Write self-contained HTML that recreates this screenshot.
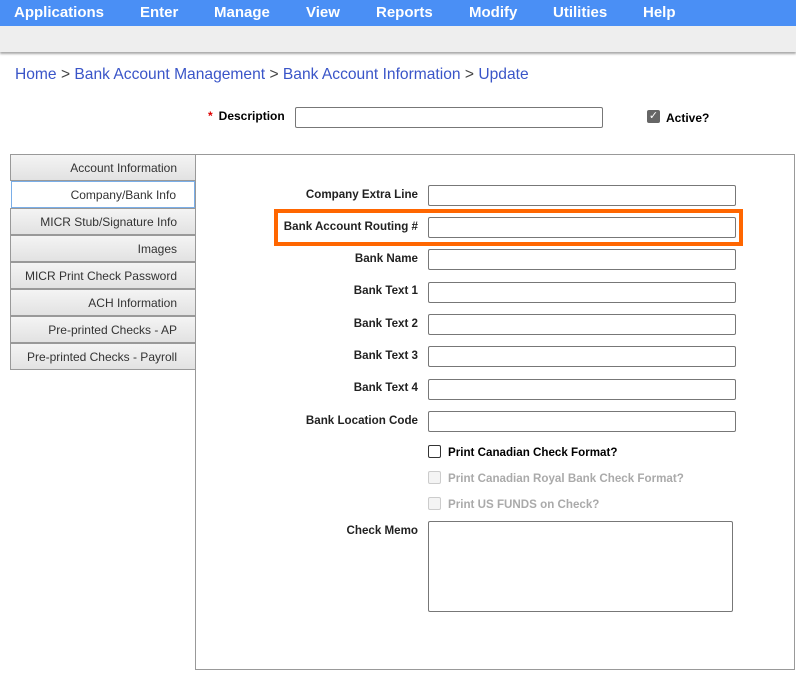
<!DOCTYPE html>
<html><head><style>
*{box-sizing:border-box}
body{margin:0;width:796px;height:673px;background:#fff;font-family:"Liberation Sans",sans-serif;position:relative;overflow:hidden}
.nav{position:absolute;left:0;top:0;width:796px;height:26px;background:#4a8ff5}
.nav span{position:absolute;top:4px;color:#fff;font-weight:bold;font-size:15px}
.bar{position:absolute;left:0;top:26px;width:796px;height:26px;background:#eee;box-shadow:0 2px 2px #aaa}
.crumb{position:absolute;left:15px;top:66px;font-size:15.6px;color:#3a55c8}
.crumb b{font-weight:normal;color:#444}
.lbl{position:absolute;font-size:11.6px;font-weight:bold;color:#222;text-align:right;width:200px}
.inp{position:absolute;left:428px;width:308px;height:21px;border:1px solid #777;border-radius:2px;background:#fff}
.tab{position:absolute;left:10px;width:186px;height:27px;background:linear-gradient(#f4f4f4,#e2e2e2);border:1px solid #999;font-size:12px;color:#333;text-align:right;padding:6px 18px 0 0}
.cb{position:absolute;left:428px;width:13px;height:13px;border:1px solid #333;border-radius:2px;background:#fff}
.ck{position:absolute;left:448px;font-size:11.6px;font-weight:bold}
</style></head><body>
<div class="nav"><span style="left:14px">Applications</span><span style="left:140px">Enter</span><span style="left:214px">Manage</span><span style="left:306px">View</span><span style="left:376px">Reports</span><span style="left:469px">Modify</span><span style="left:553px">Utilities</span><span style="left:643px">Help</span></div>
<div class="bar"></div>
<div class="crumb">Home <b>&gt;</b> Bank Account Management <b>&gt;</b> Bank Account Information <b>&gt;</b> Update</div>
<div style="position:absolute;left:208px;top:109px;font-size:12px;font-weight:bold"><span style="color:#d00;margin-right:6px">*</span>Description</div>
<div class="inp" style="left:295px;top:107px;width:308px"></div>
<div style="position:absolute;left:647px;top:110px;width:13px;height:13px;background:#666;border-radius:2px;color:#fff;font-size:11px;line-height:13px;text-align:center">✓</div>
<div style="position:absolute;left:666px;top:111px;font-size:12px;font-weight:bold">Active?</div>
<div style="position:absolute;left:195px;top:154px;width:600px;height:516px;border:1px solid #999"></div>
<div style="position:absolute;left:10px;top:154px;width:186px;height:216px;border-right:1px solid #999"></div>
<div class="tab" style="top:154px">Account Information</div>
<div class="tab" style="top:181px;background:#fff;border:1px solid #7aaee8;width:184px;left:11px">Company/Bank Info</div>
<div class="tab" style="top:208px">MICR Stub/Signature Info</div>
<div class="tab" style="top:235px">Images</div>
<div class="tab" style="top:262px">MICR Print Check Password</div>
<div class="tab" style="top:289px">ACH Information</div>
<div class="tab" style="top:316px">Pre-printed Checks - AP</div>
<div class="tab" style="top:343px">Pre-printed Checks - Payroll</div>
<div style="position:absolute;left:274px;top:209px;width:469px;height:37px;border:4px solid #ff6600"></div>
<div class="lbl" style="left:218px;top:188px">Company Extra Line</div><div class="inp" style="top:185px"></div>
<div class="lbl" style="left:218px;top:220px">Bank Account Routing #</div><div class="inp" style="top:217px"></div>
<div class="lbl" style="left:218px;top:252px">Bank Name</div><div class="inp" style="top:249px"></div>
<div class="lbl" style="left:218px;top:284px">Bank Text 1</div><div class="inp" style="top:282px"></div>
<div class="lbl" style="left:218px;top:317px">Bank Text 2</div><div class="inp" style="top:314px"></div>
<div class="lbl" style="left:218px;top:349px">Bank Text 3</div><div class="inp" style="top:346px"></div>
<div class="lbl" style="left:218px;top:381px">Bank Text 4</div><div class="inp" style="top:379px"></div>
<div class="lbl" style="left:218px;top:414px">Bank Location Code</div><div class="inp" style="top:411px"></div>
<div class="cb" style="top:445px"></div><div class="ck" style="top:446px">Print Canadian Check Format?</div>
<div class="cb" style="top:471px;border-color:#ccc;background:#f4f4f4"></div><div class="ck" style="top:472px;color:#aaa">Print Canadian Royal Bank Check Format?</div>
<div class="cb" style="top:497px;border-color:#ccc;background:#f4f4f4"></div><div class="ck" style="top:498px;color:#aaa">Print US FUNDS on Check?</div>
<div class="lbl" style="left:218px;top:524px">Check Memo</div>
<div class="inp" style="top:521px;width:305px;height:91px"></div>
</body></html>
